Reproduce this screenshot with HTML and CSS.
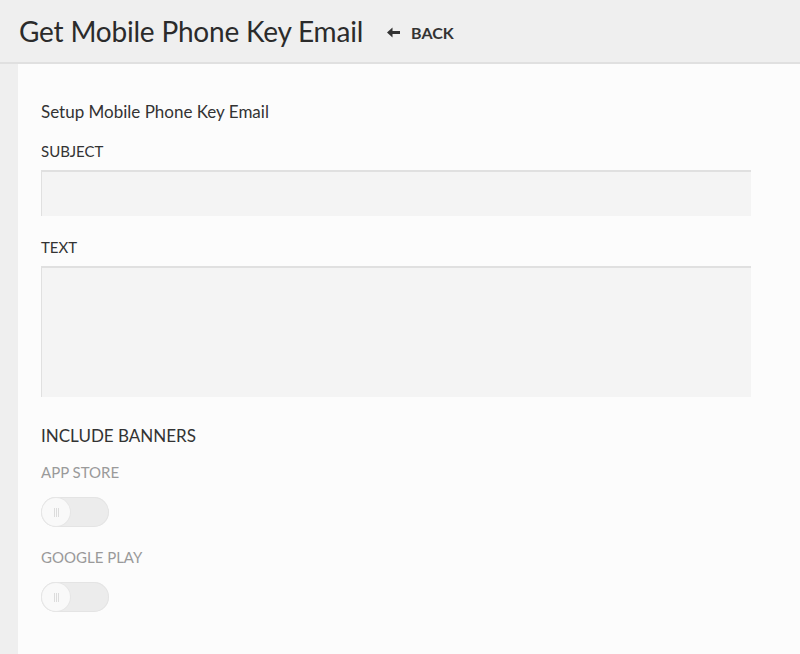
FILE: index.html
```html
<!DOCTYPE html>
<html>
<head>
<meta charset="utf-8">
<link rel="stylesheet" href="styles.css">
</head>
<body>
<header class="topbar">
  <h1 class="title">Get Mobile Phone Key Email</h1>
  <a class="back" href="#"><svg class="back-arrow" width="14" height="11" viewBox="0 0 14 11"><path d="M0 5.5 L5.5 0.5 L5.5 4 L13 4 L13 7 L5.5 7 L5.5 10.5 Z" fill="#333"/></svg>BACK</a>
</header>
<main class="panel">
  <h2 class="section-title">Setup Mobile Phone Key Email</h2>
  <label class="field-label">SUBJECT</label>
  <div class="input"></div>
  <label class="field-label field-label-text">TEXT</label>
  <div class="textarea"></div>
  <h3 class="banners-title">INCLUDE BANNERS</h3>
  <div class="toggle-group">
    <div class="toggle-label">APP STORE</div>
    <div class="toggle"><span class="knob"><i></i><i></i><i></i></span></div>
  </div>
  <div class="toggle-group">
    <div class="toggle-label">GOOGLE PLAY</div>
    <div class="toggle"><span class="knob"><i></i><i></i><i></i></span></div>
  </div>
</main>
</body>
</html>
```
FILE: styles.css
```css
html, body {
  margin: 0;
  padding: 0;
  height: 100%;
}
body {
  background: #efefef;
  font-family: Lato, "Open Sans", sans-serif;
  color: #333;
  display: flex;
  flex-direction: column;
}
.topbar {
  height: 62px;
  border-bottom: 2px solid #e0e0e0;
  display: flex;
  align-items: center;
  padding-left: 19px;
  box-sizing: content-box;
}
.title {
  margin: 0;
  font-size: 28px;
  font-weight: 400;
  color: #2b2b2b;
  letter-spacing: -0.2px;
}
.back {
  margin-left: 24px;
  display: flex;
  align-items: center;
  gap: 10px;
  font-size: 16px;
  font-weight: 700;
  color: #333;
  text-decoration: none;
  padding-top: 2px;
}
.back-arrow {
  display: block;
}
.panel {
  flex: 1;
  margin-left: 18px;
  background: #fcfcfc;
  padding: 36px 49px 0 23px;
  display: flex;
  flex-direction: column;
}
.section-title {
  margin: 0;
  font-size: 17px;
  font-weight: 400;
  line-height: 24px;
  color: #333;
}
.field-label {
  display: block;
  margin-top: 17px;
  font-size: 15px;
  line-height: 20px;
  color: #333;
}
.field-label-text {
  margin-top: 21px;
}
.input, .textarea {
  margin-top: 9px;
  background: #f4f4f4;
  border-top: 2px solid #e0e0e0;
  border-left: 1px solid #e0e0e0;
  box-sizing: border-box;
}
.input {
  height: 46px;
}
.textarea {
  height: 131px;
}
.banners-title {
  margin: 27px 0 0;
  font-size: 17px;
  font-weight: 400;
  line-height: 24px;
  color: #333;
}
.toggle-group {
  margin-top: 14px;
}
.toggle-group + .toggle-group {
  margin-top: 20px;
}
.toggle-label {
  font-size: 15px;
  line-height: 20px;
  color: #9a9a9a;
}
.toggle {
  margin-top: 15px;
  width: 68px;
  height: 30px;
  border-radius: 15px;
  background: #ececec;
  box-shadow: inset 0 0 0 1px #e4e4e4;
  position: relative;
}
.knob {
  position: absolute;
  left: 1px;
  top: 1px;
  width: 28px;
  height: 28px;
  border-radius: 50%;
  background: #f9f9f9;
  box-shadow: 0 0 0 1px #e6e6e6;
  display: flex;
  align-items: center;
  justify-content: center;
  gap: 1px;
}
.knob i {
  width: 1px;
  height: 9px;
  background: #dcdcdc;
}
```
